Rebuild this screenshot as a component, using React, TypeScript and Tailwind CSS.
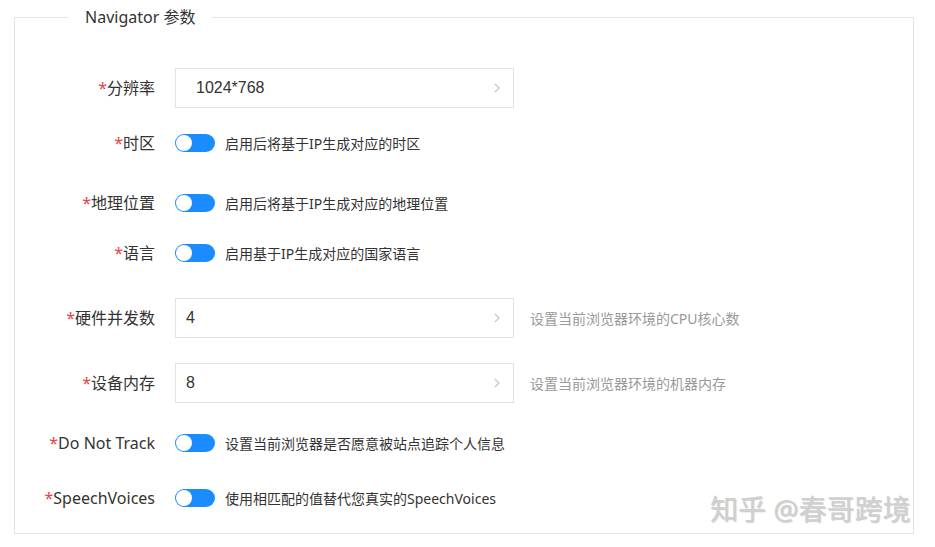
import React from "react";

const Chevron = () => (
  <svg width="8" height="12" viewBox="0 0 8 12" className="shrink-0">
    <path d="M2 2 L6 6 L2 10" fill="none" stroke="#c8c8c8" strokeWidth="1.3" />
  </svg>
);

const Toggle = () => (
  <div className="relative h-[18px] w-[40px] shrink-0 rounded-full bg-[#1a8cff]">
    <div className="absolute left-[1px] top-[1px] h-[16px] w-[16px] rounded-full bg-white" />
  </div>
);

const Label = ({ text }: { text: string }) => (
  <div className="w-[140px] shrink-0 text-right text-[16px] leading-[20px] text-[#333]">
    <span className="text-[#e0464b]">*</span>
    {text}
  </div>
);

const InputRow = ({
  label,
  value,
  pad,
  desc,
  mt,
}: {
  label: string;
  value: string;
  pad: string;
  desc?: string;
  mt: string;
}) => (
  <div className={`flex h-[40px] items-center ${mt}`}>
    <Label text={label} />
    <div
      className={`ml-5 flex h-[40px] w-[339px] items-center justify-between border border-[#e2e2e2] pr-[12px] ${pad}`}
    >
      <span className="text-[16px] text-[#333] [font-family:'Liberation_Sans',Arial,sans-serif]">
        {value}
      </span>
      <Chevron />
    </div>
    {desc && <span className="ml-4 text-[14px] text-[#999]">{desc}</span>}
  </div>
);

const ToggleRow = ({ label, desc, mt }: { label: string; desc: string; mt: string }) => (
  <div className={`flex h-[40px] items-center ${mt}`}>
    <Label text={label} />
    <div className="ml-5 flex items-center">
      <Toggle />
      <span className="ml-[10px] text-[14px] text-[#333]">{desc}</span>
    </div>
  </div>
);

export default function App() {
  return (
    <div className="relative h-[547px] w-[935px] overflow-hidden bg-white [font-family:'Noto_Sans','Noto_Sans_CJK_SC',sans-serif]">
      <fieldset className="ml-[14px] mt-[5px] w-[900px] border border-[#e4e4e4] pb-[15px]">
        <legend className="ml-[53px] px-[17px] text-[16px] leading-[24px] text-[#333]">
          Navigator 参数
        </legend>
        <InputRow label="分辨率" value="1024*768" pad="pl-[20px]" mt="mt-[39px]" />
        <ToggleRow label="时区" desc="启用后将基于IP生成对应的时区" mt="mt-[15px]" />
        <ToggleRow label="地理位置" desc="启用后将基于IP生成对应的地理位置" mt="mt-[20px]" />
        <ToggleRow label="语言" desc="启用基于IP生成对应的国家语言" mt="mt-[10px]" />
        <InputRow
          label="硬件并发数"
          value="4"
          pad="pl-[10px]"
          desc="设置当前浏览器环境的CPU核心数"
          mt="mt-[25px]"
        />
        <InputRow
          label="设备内存"
          value="8"
          pad="pl-[10px]"
          desc="设置当前浏览器环境的机器内存"
          mt="mt-[25px]"
        />
        <ToggleRow label="Do Not Track" desc="设置当前浏览器是否愿意被站点追踪个人信息" mt="mt-[20px]" />
        <ToggleRow label="SpeechVoices" desc="使用相匹配的值替代您真实的SpeechVoices" mt="mt-[15px]" />
      </fieldset>
      <div className="absolute left-[710px] top-[491px] text-[28px] leading-[36px] text-[#d0d0d0] [text-shadow:1px_1px_1px_rgba(0,0,0,0.2)]">
        知乎 @春哥跨境
      </div>
    </div>
  );
}
